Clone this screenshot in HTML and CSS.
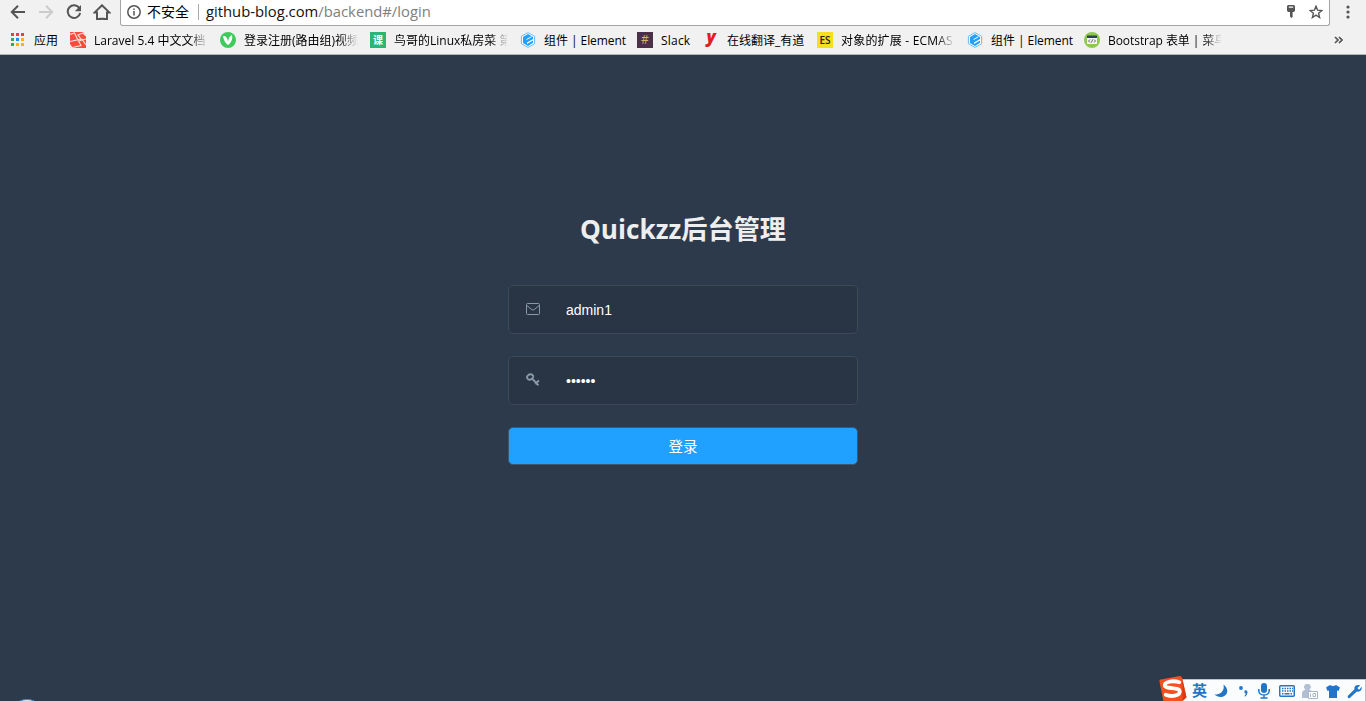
FILE: index.html
```
<!DOCTYPE html>
<html lang="zh-CN">
<head>
<meta charset="utf-8">
<title>Quickzz后台管理</title>
<link rel="stylesheet" href="styles.css">
</head>
<body>
<header class="browser">
  <div class="toolbar">
    <div class="nav">
      <svg width="16" height="16" viewBox="0 0 16 16" class="stroke"><path d="M15 8H2M8 1.7 1.8 8 8 14.3"/></svg>
      <svg width="16" height="16" viewBox="0 0 16 16" class="stroke faded"><path d="M1 8h13M8 1.7 14.2 8 8 14.3"/></svg>
      <svg width="16" height="16" viewBox="0 0 16 16" class="stroke"><path d="M13.4 4.2A6.3 6.3 0 1 0 14.2 9"/><path class="solid" d="M15 1v6.2H8.8z"/></svg>
      <svg width="18" height="16" viewBox="0 0 18 16" class="stroke"><path d="M1.5 8.6 9 1.3l7.5 7.3H14V15h-3.500v-.2h-3v.2H4V8.6z"/></svg>
    </div>
    <div class="omnibox">
      <svg class="info" width="14" height="14" viewBox="0 0 14 14"><circle cx="7" cy="7" r="6.2"/><path d="M7 6v4.4M7 3.400v1.700"/></svg>
      <span class="insecure">不安全</span>
      <span class="url"><span class="host">github-blog.com</span>/backend#/login</span>
      <svg class="pass" width="10" height="13" viewBox="0 0 10 13"><path fill="#555" fill-rule="evenodd" d="M2 0h6l1 1v5L7.700 7H6.600v5L5.400 13 4 11.600V7H2.300L1 6V1zM2.800 1.500v1.200h4.400V1.500z"/></svg>
      <svg class="star" width="14" height="14" viewBox="0 0 14 14"><path d="m7 1.200 1.600 4 4.300.3-3.300 2.800 1 4.200L7 10.200l-3.600 2.300 1-4.200L1.100 5.500l4.300-.3z"/></svg>
    </div>
    <svg class="more" width="4" height="14" viewBox="0 0 4 14"><circle cx="2" cy="2" r="1.600"/><circle cx="2" cy="7" r="1.600"/><circle cx="2" cy="12" r="1.600"/></svg>
  </div>
  <nav class="bookmarks">
    <a class="mark"><svg width="16" height="16" viewBox="0 0 16 16"><path fill="#ea4335" d="M1 1h3v3H1zM6 1h3v3H6zM11 1h3v3h-3z"/><path fill="#34a853" d="M1 6h3v3H1zM1 11h3v3H1z"/><path fill="#2a86f3" d="M6 6h3v3H6z"/><path fill="#fbb605" d="M11 6h3v3h-3zM6 11h3v3H6zM11 11h3v3h-3z"/></svg><span>应用</span></a>
    <a class="mark"><svg width="16" height="16" viewBox="0 0 16 16"><path fill="#fb4b3b" d="M0 0h13l3 4v12H3L0 12z"/><path fill="none" stroke="#f7ddd9" stroke-width="1.200" d="M0 2.500 4.500 1l4 8L16 7M0 9.500 11 7 8 3l5-2 3 3M8.500 9 11 13.500 0 16M12 7l4 6"/></svg><span class="fade">Laravel 5.4 中文文档</span></a>
    <a class="mark"><svg width="16" height="16" viewBox="0 0 16 16"><circle cx="8" cy="8" r="8" fill="#3fcb5c"/><path fill="#fff" d="M3 4c3-.5 4.500 2 5 6 .5-4 1.500-6 4-7 1 4-1 8-4 10C5.500 11.500 3.500 8 3 4z"/></svg><span class="fade">登录注册(路由组)视频</span></a>
    <a class="mark"><i class="tile course">课</i><span class="fade">鸟哥的Linux私房菜 第</span></a>
    <a class="mark"><svg width="16" height="16" viewBox="0 0 16 16"><path fill="#fff" stroke="#6abaff" d="m8 .6 6.600 3.700v7.400L8 15.400l-6.600-3.700V4.300z"/><path fill="#20a0ff" d="m8 2 5 3v2L7 10.500V12l6-3.500v2.200L8 14l-5-3V5z"/><path stroke="#fff" d="m6.500 7.500 5-2.800"/></svg><span class="element">组件 | Element</span></a>
    <a class="mark"><i class="tile slack">#</i><span class="wide">Slack</span></a>
    <a class="mark"><i class="youdao">y</i><span>在线翻译_有道</span></a>
    <a class="mark"><i class="tile es">ES</i><span class="fade wide">对象的扩展 - ECMAS</span></a>
    <a class="mark"><svg width="16" height="16" viewBox="0 0 16 16"><path fill="#fff" stroke="#6abaff" d="m8 .6 6.600 3.700v7.400L8 15.400l-6.600-3.700V4.300z"/><path fill="#20a0ff" d="m8 2 5 3v2L7 10.500V12l6-3.500v2.200L8 14l-5-3V5z"/><path stroke="#fff" d="m6.500 7.500 5-2.800"/></svg><span class="element">组件 | Element</span></a>
    <a class="mark"><svg width="16" height="16" viewBox="0 0 16 16"><circle cx="8" cy="8" r="8" fill="#8cc94c"/><path fill="#f4f4f4" d="M3 4h10v8H3z"/><path fill="#2e4453" d="M3 3.500h10V6H3z"/><path fill="none" stroke="#555" stroke-width=".9" d="M6 7.500 4.500 9 6 10.500M10 7.500 11.500 9 10 10.500M8.600 7.500l-1.200 3"/></svg><span class="fade element">Bootstrap 表单 | 菜鸟</span></a>
    <svg class="overflow" width="9" height="8" viewBox="0 0 9 8"><path d="m1 1 3 3-3 3M5 1l3 3-3 3"/></svg>
  </nav>
</header>
<main class="page">
  <form class="login">
    <h1>Quickzz后台管理</h1>
    <label class="field">
      <svg width="14" height="12" viewBox="0 0 14 12"><path fill="none" stroke="#889aa4" d="M1.500.5h11q1 0 1 1v9q0 1-1 1h-11q-1 0-1-1v-9q0-1 1-1zM.8 2.500 6 6.700q1 .7 2 0l5.200-4.200"/></svg>
      <input type="text" value="admin1">
    </label>
    <label class="field">
      <svg width="14" height="14" viewBox="0 0 14 14"><path fill="none" stroke="#889aa4" stroke-width="1.900" d="M6.800 2.300C5.500.8 3.500.800 2 2.300S.8 5 2 6.200s3 .3 4.200-.9 1.700-1.800.6-3zM6.500 6l6 6.300M9.300 11l2-2M11.200 8.900l1.800-1.500"/></svg>
      <input type="password" value="123456">
    </label>
    <button type="button">登录</button>
  </form>
  <div class="bubble"></div>
</main>
<aside class="ime">
  <svg class="sogou" width="30" height="27" viewBox="0 0 30 27"><path fill="#f2511f" d="m1 5 21-4q2 0 2.500 2L29 23l-4 4H5L1 7z"/><path fill="#d83b14" d="m24.500 3 4.500 20-4 4z"/><path fill="none" stroke="#fff" stroke-width="4" stroke-linecap="round" d="M21.500 7.500C14 5 6 7.500 6.500 11c.5 4 15 1 15.500 6 .4 4.500-9 6-14.500 3.500"/></svg>
  <div class="tools">
    <b>英</b>
    <svg width="14" height="14" viewBox="0 0 14 14"><path d="M9.500.5c4 3 5 7.500 2 10.500S3.500 13.500.5 10.500C5 11 11 8 9.500.5z"/></svg>
    <svg width="14" height="14" viewBox="0 0 14 14"><circle cx="5" cy="4" r="1.900"/><path d="M8.500 6.500q3-1 3 2-.2 3-2.500 4.200l-.5-1q1.200-.7 1.300-2-1.800-.5-1.300-3.200z"/></svg>
    <svg width="14" height="16" viewBox="0 0 14 16"><rect x="4" width="6" height="10" rx="3"/><path fill="none" stroke="#2275c7" stroke-width="1.500" d="M1.800 6v2q.5 4 5.200 4t5.200-4V6M7 12v3M3.500 15h7"/></svg>
    <svg width="16" height="12" viewBox="0 0 16 12"><rect x=".75" y=".75" width="14.500" height="10.500" rx="1" fill="#fff" stroke="#2275c7" stroke-width="1.500"/><path fill="none" stroke="#2275c7" stroke-width="1.500" stroke-dasharray="1.500 1" d="M3 3.500h11M3 6h11"/><path stroke="#2275c7" stroke-width="1.500" d="M3 8.700h1.500M5.500 8.700h5M11.500 8.700H13"/></svg>
    <svg width="16" height="15" viewBox="0 0 16 15"><path fill="#b2bfd2" d="M5.500 0a3 3 0 0 1 1.800 5.600Q10 7 10 8v6H0V9q0-2 3.600-3.400A3 3 0 0 1 5.500 0z"/><path fill="#fff" stroke="#a7b6cb" d="M6.500 7.500h9v7h-9z"/><path fill="none" stroke="#a7b6cb" d="M8.500 9.500V13M11 9.500h2.500v3H11z"/></svg>
    <svg width="14" height="14" viewBox="0 0 14 14"><path d="M4 1q3 2 6 0l4 2.500-1.500 3.500-1.500-.5V14H3V6.500L1.500 7 0 3.500z"/></svg>
    <svg width="15" height="15" viewBox="0 0 16 16"><path d="M14 1.500 11.300 4l.5 1.500 1.500.3L15.500 3c1 3-1.500 6-5 5L3 15Q0 15.500 1 12.500L8 5.500C7 2 11 0 14 1.500z"/></svg>
  </div>
</aside>
</body>
</html>
```
FILE: styles.css
```
* { box-sizing: border-box; }
body {
  margin: 0;
  height: 701px;
  overflow: hidden;
  display: flex;
  flex-direction: column;
  background: #2d3a4b;
  font-family: "Open Sans", "Noto Sans CJK SC", sans-serif;
}
svg { display: block; flex: none; }
.browser {
  height: 55px;
  flex: none;
  background: #f1f1f1;
  border-bottom: 1px solid #b3b3b3;
}
.toolbar { height: 26px; display: flex; align-items: flex-start; }
.nav { width: 120px; padding: 4px 0 0 10px; display: flex; gap: 12px; flex: none; }
.nav svg:last-child { margin-left: -1px; }
.stroke { fill: none; stroke: #555; stroke-width: 2; }
.stroke .solid { fill: #555; stroke: none; }
.faded { stroke: #ccc; }
.omnibox {
  width: 1210px;
  height: 26px;
  padding: 0 6px 2px 6px;
  display: flex;
  align-items: center;
  background: #fff;
  border: 1px solid #a5a5a5;
  border-top: 0;
  border-radius: 0 0 3px 3px;
}
.info { fill: none; stroke: #555; stroke-width: 1.5; }
.insecure {
  width: 52px;
  margin-left: 6px;
  font-size: 14px;
  line-height: 16px;
  border-right: 1px solid #aaa;
}
.url { margin: 0 0 2px 7px; font-size: 14.8px; line-height: 20px; color: #808080; }
.host { color: #111; }
.pass { margin-left: auto; margin-right: 13px; }
.star { fill: none; stroke: #555; stroke-width: 1.4; }
.more { margin: 5px 0 0 16px; fill: #555; }
.bookmarks {
  height: 28px;
  padding-left: 10px;
  display: grid;
  grid-template-columns: 60px 150px 150px 150px 117px 66px 114px 150px 117px 250px 12px;
  align-items: center;
  font-size: 12px;
  line-height: 20px;
}
.mark { display: flex; align-items: center; gap: 8px; white-space: nowrap; color: #000; }
.mark span { margin-top: 2px; }
.mark .element { letter-spacing: -.06px; }
.mark .wide { letter-spacing: .2px; }
.fade {
  width: 114px;
  overflow: hidden;
  -webkit-mask-image: linear-gradient(to right, #000 84%, transparent);
  mask-image: linear-gradient(to right, #000 84%, transparent);
}
.tile, .youdao { width: 16px; height: 16px; flex: none; font-style: normal; text-align: center; line-height: 16px; }
.course { background: #2cb574; color: #fff; font-size: 10px; font-weight: bold; }
.slack { background: #4b3147; color: #d3b65a; font-size: 12px; }
.es { background: #f7df1e; color: #222; font-size: 10px; font-weight: 600; }
.youdao { color: #e41b23; font: italic 800 17px/9px "Open Sans", sans-serif; }
.overflow { fill: none; stroke: #555; stroke-width: 1.7; }
.page { flex: 1; position: relative; overflow: hidden; }
.login { width: 350px; margin: 156px auto 0; display: flex; flex-direction: column; }
h1 {
  margin: 0 0 39px;
  height: 35px;
  font-size: 26.2px;
  line-height: 36px;
  font-weight: 700;
  text-align: center;
  white-space: nowrap;
  color: #eee;
}
.field {
  height: 49px;
  margin-bottom: 22px;
  padding-left: 17px;
  display: flex;
  align-items: center;
  gap: 26px;
  background: #293444;
  border: 1px solid #3e4957;
  border-radius: 5px;
}
.field svg { margin-bottom: 1px; }
.field input {
  width: 270px;
  padding: 0;
  border: 0;
  outline: 0;
  background: none;
  color: #fff;
  font: 14px "Liberation Sans", sans-serif;
}
.login button {
  height: 38px;
  padding: 0 0 2px;
  border: 1px solid #3e5770;
  border-radius: 5px;
  background: #20a0ff;
  color: #fff;
  font: 14.5px "Noto Sans CJK SC", sans-serif;
}
.bubble {
  position: absolute;
  left: 9px;
  top: 644px;
  width: 36px;
  height: 36px;
  border: 1px solid #4386bd;
  border-radius: 50%;
  background: #dcebf6;
}
.ime { position: absolute; right: 0; bottom: 0; width: 208px; height: 26px; display: flex; align-items: flex-end; }
.sogou { position: relative; z-index: 1; height: 26px; }
.tools {
  height: 22px;
  flex: 1;
  margin-left: -13px;
  padding: 1px 3px 0 17px;
  display: flex;
  align-items: center;
  justify-content: space-between;
  background: #fbfcfe;
  border: 1px solid #b8c2d2;
  border-width: 1px 1px 0 0;
  fill: #2275c7;
  color: #2275c7;
}
.tools b { margin-top: -2px; font: 700 15px/20px "Noto Sans CJK SC", sans-serif; }
```
